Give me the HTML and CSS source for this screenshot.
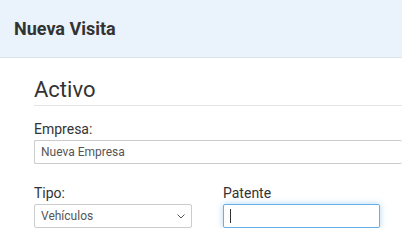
FILE: index.html
```html
<!DOCTYPE html>
<html lang="es">
<head>
  <meta charset="UTF-8" />
  <title>Nueva Visita</title>
  <link rel="stylesheet" href="styles.css">
</head>
<body>
  <div class="header">
    <h2>Nueva Visita</h2>
  </div>

  <div class="content">
    <h3 class="section-title">Activo</h3>

    <div class="field">
      <label for="empresa">Empresa:</label>
      <input type="text" id="empresa" class="input wide" value="Nueva Empresa" />
    </div>

    <div class="row">
      <div class="field">
        <label for="tipo">Tipo:</label>
        <div class="select-wrap">
          <select id="tipo" class="input">
            <option>Vehículos</option>
            <option>Personas</option>
          </select>
          <svg class="caret" width="8" height="5" viewBox="0 0 8 5"><path d="M0.5 0.5 L4 4 L7.5 0.5" fill="none" stroke="#555" stroke-width="1"/></svg>
        </div>
      </div>
      <div class="field">
        <label for="patente">Patente</label>
        <div class="input focus"><span class="cursor"></span></div>
      </div>
    </div>
  </div>
</body>
</html>
```

FILE: styles.css
```css
body {
  margin: 0;
  font-family: Roboto, "Liberation Sans", sans-serif;
  color: #333;
  background: #fff;
  overflow: hidden;
}
.header {
  background: #eaf3fc;
  border-bottom: 1px solid #dde3ea;
  height: 57px;
  padding-left: 14px;
  display: flex;
  align-items: center;
}
.header h2 {
  margin: 0;
  font-size: 18px;
  font-weight: 700;
  color: #333;
}
.content {
  padding: 19px 0 0 34px;
}
.section-title {
  margin: 0;
  font-size: 22px;
  font-weight: 400;
  line-height: 26px;
  padding-bottom: 2px;
  border-bottom: 1px solid #e5e5e5;
}
.field label {
  display: block;
  font-size: 14px;
  line-height: 16px;
  margin-bottom: 3px;
}
.content > .field {
  margin-top: 15px;
}
.input {
  box-sizing: border-box;
  height: 24px;
  border: 1px solid #ccc;
  border-radius: 2px;
  font-family: inherit;
  font-size: 12px;
  color: #555;
  padding: 0 6px;
  background: #fff;
  outline: none;
}
.wide {
  width: 100%;
  border-right: none;
}
.row {
  display: grid;
  grid-template-columns: 158px 157px;
  column-gap: 31px;
  margin-top: 21px;
}
.select-wrap {
  position: relative;
}
.select-wrap select {
  width: 100%;
  appearance: none;
  -webkit-appearance: none;
}
.caret {
  position: absolute;
  right: 7px;
  top: 10px;
}
.focus {
  border-color: #66afe9;
  box-shadow: 0 0 6px rgba(102, 175, 233, 0.5);
  display: flex;
  align-items: center;
  padding-left: 6px;
}
.cursor {
  width: 1px;
  height: 14px;
  background: #333;
}
```
